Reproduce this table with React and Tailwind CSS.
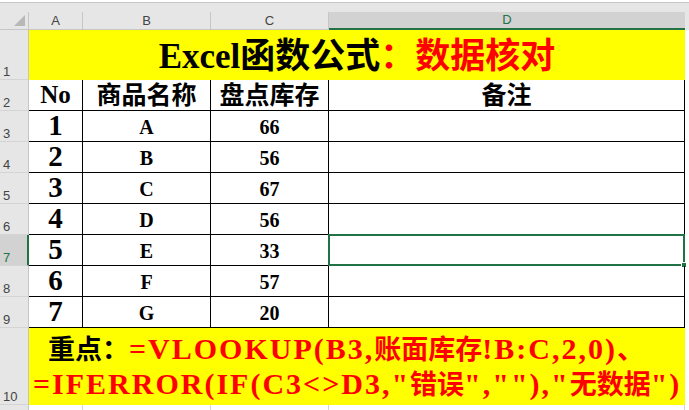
const data = [
  [1, "A", 66],
  [2, "B", 56],
  [3, "C", 67],
  [4, "D", 56],
  [5, "E", 33],
  [6, "F", 57],
  [7, "G", 20],
];

const RowHead = ({ n, h, active }) => (
  <div
    className={`w-[29px] shrink-0 flex items-end pl-[3px] pb-[1px] text-[13px] leading-none font-normal font-['Liberation_Sans',sans-serif] border-b border-[#d4d4d4] ${
      active
        ? "bg-[#d2d2d2] text-[#217346] border-r-2 border-r-[#217346]"
        : "bg-[#e6e6e6] text-[#444] border-r border-r-[#c6c6c6]"
    } ${h}`}
  >
    {n}
  </div>
);

const ColHead = ({ label, w, last }) => (
  <div
    className={`${w} shrink-0 flex items-center justify-center text-[13px] font-normal font-['Liberation_Sans',sans-serif] ${
      last
        ? "bg-[#d2d2d2] text-[#217346] border-b-2 border-[#217346]"
        : "bg-[#e6e6e6] text-[#444] border-r border-[#c6c6c6] border-b border-b-[#c6c6c6]"
    }`}
  >
    {label}
  </div>
);

const Cjk = ({ children }) => <span className="text-[27px] tracking-normal">{children}</span>;

export default function App() {
  return (
    <div className="w-[689px] h-[410px] overflow-hidden bg-white font-['Liberation_Serif','Noto_Sans_CJK_SC',serif] font-bold text-black">
      {/* top strip */}
      <div className="h-[2px] bg-white" />
      <div className="h-px bg-[#c6c6c6]" />
      <div className="h-[9px] bg-[#e6e6e6]" />

      {/* column headers */}
      <div className="flex h-[18px] bg-[#e6e6e6]">
        <div className="w-[29px] shrink-0 relative border-r border-[#c6c6c6] border-b">
          <div className="absolute right-[3px] bottom-[3px] w-0 h-0 border-l-[11px] border-l-transparent border-b-[11px] border-b-[#b8b8b8]" />
        </div>
        <ColHead label="A" w="w-[54px]" />
        <ColHead label="B" w="w-[128px]" />
        <ColHead label="C" w="w-[118px]" />
        <ColHead label="D" w="w-[356px]" last />
        <div className="flex-1 bg-[#e6e6e6]" />
      </div>

      {/* row 1: title */}
      <div className="flex">
        <RowHead n="1" h="h-[50px]" />
        <div className="w-[656px] h-[50px] bg-[#ffff00] flex items-center justify-center text-[35px] leading-none pt-[2px]">
          <span>Excel函数公式</span>
          <span className="text-[#ff0000]">：数据核对</span>
        </div>
        <div className="flex-1 bg-white" />
      </div>

      {/* row 2: headers */}
      <div className="flex">
        <RowHead n="2" h="h-[31px]" />
        <div className="w-[54px] h-[31px] border-r border-b border-black flex items-end justify-center pb-[3px] text-[25px] leading-none">
          No
        </div>
        <div className="w-[128px] h-[31px] border-r border-b border-black flex items-end justify-center pb-[2px] text-[25px] leading-none">
          商品名称
        </div>
        <div className="w-[118px] h-[31px] border-r border-b border-black flex items-end justify-center pb-[2px] text-[25px] leading-none">
          盘点库存
        </div>
        <div className="w-[356px] h-[31px] border-r border-b border-black flex items-end justify-center pb-[2px] text-[25px] leading-none">
          备注
        </div>
        <div className="flex-1 bg-white" />
      </div>

      {/* data rows */}
      {data.map(([no, name, qty], i) => {
        const active = i === 4;
        return (
          <div key={no} className="flex">
            <RowHead n={String(i + 3)} h="h-[31px]" active={active} />
            <div className="w-[54px] h-[31px] border-r border-b border-black flex items-end justify-center pb-[1px] text-[29px] leading-none">
              {no}
            </div>
            <div className="w-[128px] h-[31px] border-r border-b border-black flex items-end justify-center pb-[4px] text-[20px] leading-none">
              {name}
            </div>
            <div className="w-[118px] h-[31px] border-r border-b border-black flex items-end justify-center pb-[4px] text-[20px] leading-none">
              {qty}
            </div>
            <div className="w-[356px] h-[31px] border-r border-b border-black relative">
              {active && (
                <div className="absolute -top-px -left-px right-[-1px] bottom-[-1px] border-2 border-[#217346]">
                  <div className="absolute right-[-4px] bottom-[-4px] w-[6px] h-[6px] bg-[#217346] border border-white" />
                </div>
              )}
            </div>
            <div className="flex-1 bg-white" />
          </div>
        );
      })}

      {/* row 10: formula note */}
      <div className="flex">
        <RowHead n="10" h="h-[77px]" />
        <div className="w-[656px] h-[77px] bg-[#ffff00] flex flex-col justify-center gap-[5px] text-[30px] tracking-[2px] leading-none text-[#ff0000] whitespace-nowrap">
          <div className="pl-[19px]">
            <span className="text-black text-[27px] tracking-normal">重点：</span>=VLOOKUP(B3,<Cjk>账面库存</Cjk>!B:C,2,0)<Cjk>、</Cjk>
          </div>
          <div className="pl-[4px]">
            =IFERROR(IF(C3&lt;&gt;D3,"<Cjk>错误</Cjk>",""),"<Cjk>无数据</Cjk>")
          </div>
        </div>
        <div className="flex-1 bg-white" />
      </div>

      {/* blank row below */}
      <div className="flex h-[5px]">
        <div className="w-[29px] bg-[#e6e6e6] border-r border-[#c6c6c6]" />
        <div className="w-[54px] border-r border-[#d4d4d4]" />
        <div className="w-[128px] border-r border-[#d4d4d4]" />
        <div className="w-[118px] border-r border-[#d4d4d4]" />
        <div className="w-[356px] border-r border-[#d4d4d4]" />
      </div>
    </div>
  );
}
